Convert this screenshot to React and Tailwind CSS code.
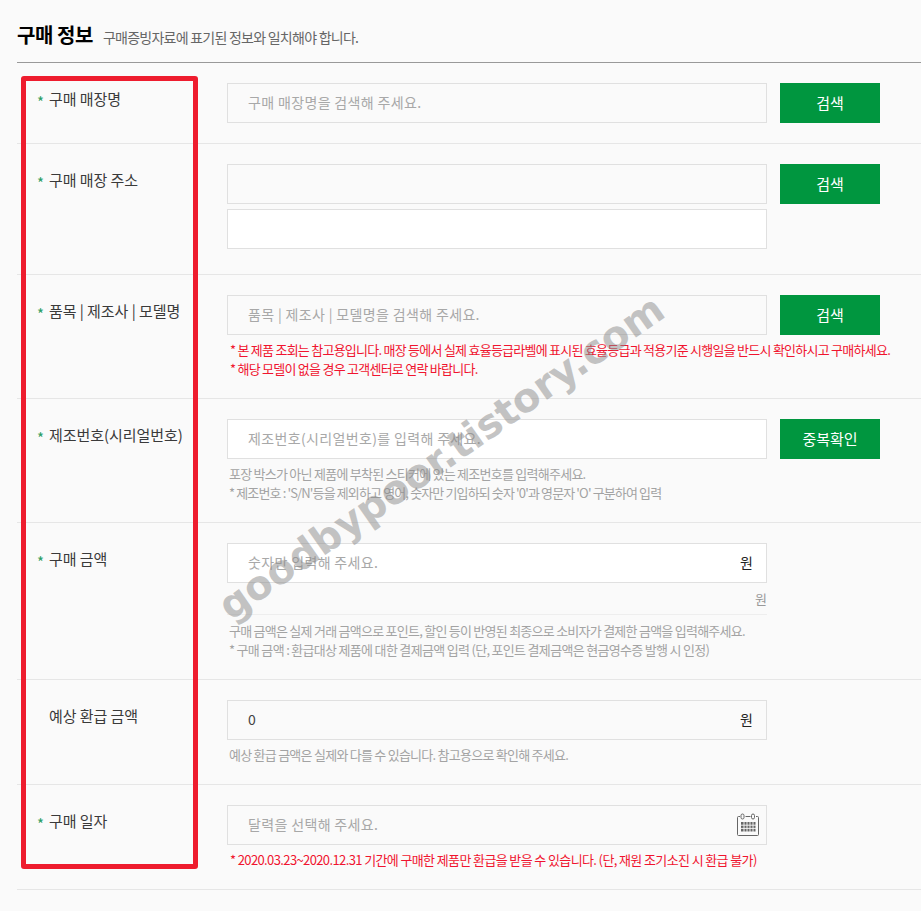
import React from 'react';

const font = { fontFamily: '"Noto Sans CJK KR", "Noto Sans", sans-serif' };

function Star() {
  return <span className="absolute -left-[12px] top-[3px] text-[15px] text-[#2a9d63]">*</span>;
}

function Row({ label, required, className = '', children }) {
  return (
    <div className={`flex border-b border-[#e6e6e6] ${className}`}>
      <div className="w-[210px] shrink-0 pt-[25px] pl-[32px]">
        <span className="relative block text-[15px] leading-[22px] tracking-[-0.05px] text-[#3a3a3a]">
          {required && <Star />}
          {label}
        </span>
      </div>
      <div className="w-[694px]">{children}</div>
    </div>
  );
}

function Field({ placeholder, value, white, suffix, icon }) {
  return (
    <div className={`flex h-[40px] w-[540px] items-center border border-[#e0e0e0] pl-[20px] pr-[13px] ${white ? 'bg-white' : 'bg-[#fafafa]'}`}>
      <input
        readOnly
        value={value || ''}
        placeholder={placeholder}
        className="min-w-0 flex-1 bg-transparent pb-[2px] text-[14px] tracking-[0.35px] text-[#444] outline-none placeholder:text-[#a8a8a8]"
      />
      {suffix && <span className="pb-[2px] text-[14px] text-[#222]">{suffix}</span>}
      {icon}
    </div>
  );
}

function Btn({ children }) {
  return (
    <button type="button" className="h-[40px] w-[100px] shrink-0 bg-[#00963f] text-[15px] text-white">
      {children}
    </button>
  );
}

function Note({ children, red, tracking = 'tracking-[-0.75px]' }) {
  return (
    <p className={`text-[13px] leading-[19px] ${tracking} ${red ? 'text-[#f0142f]' : 'text-[#a3a3a3]'}`}>
      {children}
    </p>
  );
}

function CalendarIcon() {
  return (
    <svg width="24" height="24" viewBox="0 0 24 24" fill="none" stroke="#666" strokeWidth="1" className="-mr-[7px]">
      <path d="M4 3.5H2.5a1 1 0 0 0-1 1v17a1 1 0 0 0 1 1h19a1 1 0 0 0 1-1v-17a1 1 0 0 0-1-1H20M9.5 3.5h5" />
      <rect x="5" y="1" width="3" height="5" rx="1.5" />
      <rect x="15.5" y="1" width="3" height="5" rx="1.5" />
      <rect x="5" y="9" width="14.5" height="9.5" fill="#666" stroke="none" />
      <path stroke="#fafafa" strokeWidth="0.9" d="M8 9v10M11 9v10M14 9v10M17 9v10M5 12.2h15M5 15.4h15" />
    </svg>
  );
}

export default function App() {
  return (
    <div className="relative h-[911px] w-[921px] overflow-hidden bg-[#fafafa]" style={font}>
      {/* Title */}
      <div className="ml-[17px] flex h-[63px] items-start border-b border-[#999] pt-[21px]">
        <h2 className="text-[20px] font-bold leading-[28px] tracking-[-0.45px] text-black">구매 정보</h2>
        <span className="ml-[10px] mt-[6px] text-[14px] leading-[20px] tracking-[-0.75px] text-[#666]">
          구매증빙자료에 표기된 정보와 일치해야 합니다.
        </span>
      </div>

      <div className="ml-[17px]">
        <Row label="구매 매장명" required className="h-[81px]">
          <div className="flex gap-[13px] pt-[20px]">
            <Field placeholder="구매 매장명을 검색해 주세요." />
            <Btn>검색</Btn>
          </div>
        </Row>

        <Row label="구매 매장 주소" required className="h-[131px]">
          <div className="flex gap-[13px] pt-[20px]">
            <div className="flex flex-col gap-[5px]">
              <Field />
              <Field white />
            </div>
            <Btn>검색</Btn>
          </div>
        </Row>

        <Row label="품목 | 제조사 | 모델명" required className="h-[124px]">
          <div className="flex gap-[13px] pt-[20px]">
            <Field placeholder="품목 | 제조사 | 모델명을 검색해 주세요." />
            <Btn>검색</Btn>
          </div>
          <div className="ml-[3px] mt-[5px]">
            <Note red>* 본 제품 조회는 참고용입니다. 매장 등에서 실제 효율등급라벨에 표시된 효율등급과 적용기준 시행일을 반드시 확인하시고 구매하세요.</Note>
            <Note red>* 해당 모델이 없을 경우 고객센터로 연락 바랍니다.</Note>
          </div>
        </Row>

        <Row label="제조번호(시리얼번호)" required className="h-[124px]">
          <div className="flex gap-[13px] pt-[20px]">
            <Field white placeholder="제조번호(시리얼번호)를 입력해 주세요." />
            <Btn>중복확인</Btn>
          </div>
          <div className="ml-[2px] mt-[5px]">
            <Note>포장 박스가 아닌 제품에 부착된 스티커에 있는 제조번호를 입력해주세요.</Note>
            <Note tracking="tracking-[-0.87px]">* 제조번호 : 'S/N'등을 제외하고 영어, 숫자만 기입하되 숫자 '0'과 영문자 'O' 구분하여 입력</Note>
          </div>
        </Row>

        <Row label="구매 금액" required className="h-[157px]">
          <div className="pt-[20px]">
            <Field white placeholder="숫자만 입력해 주세요." suffix="원" />
            <div className="flex h-[32px] w-[540px] items-center justify-end border-b border-[#eeeeee] text-[13px] text-[#999]">원</div>
            <div className="ml-[2px] mt-[6px]">
              <Note>구매 금액은 실제 거래 금액으로 포인트, 할인 등이 반영된 최종으로 소비자가 결제한 금액을 입력해주세요.</Note>
              <Note tracking="tracking-[-0.69px]">* 구매 금액 : 환급대상 제품에 대한 결제금액 입력 (단, 포인트 결제금액은 현금영수증 발행 시 인정)</Note>
            </div>
          </div>
        </Row>

        <Row label="예상 환급 금액" className="h-[105px]">
          <div className="pt-[20px]">
            <Field value="0" suffix="원" />
            <div className="ml-[2px] mt-[5px]">
              <Note>예상 환급 금액은 실제와 다를 수 있습니다. 참고용으로 확인해 주세요.</Note>
            </div>
          </div>
        </Row>

        <Row label="구매 일자" required className="h-[105px]">
          <div className="pt-[20px]">
            <Field placeholder="달력을 선택해 주세요." icon={<CalendarIcon />} />
            <div className="ml-[3px] mt-[5px]">
              <Note red tracking="tracking-[-0.62px]">* 2020.03.23~2020.12.31 기간에 구매한 제품만 환급을 받을 수 있습니다. (단, 재원 조기소진 시 환급 불가)</Note>
            </div>
          </div>
        </Row>
      </div>

      {/* Red highlight drawn over the labels */}
      <div className="pointer-events-none absolute left-[21px] top-[76px] h-[793px] w-[177px] rounded-[3px] border-[5px] border-[#ee1c2e]" />

      {/* Blog watermark */}
      <div
        className="pointer-events-none absolute left-[441px] top-[457px] -translate-x-1/2 -translate-y-1/2 -rotate-[35deg] whitespace-nowrap text-[40px] font-bold text-[#8a8a8a]/50"
        style={{ fontFamily: '"DejaVu Sans", sans-serif' }}
      >
        goodbypoor.tistory.com
      </div>
    </div>
  );
}
